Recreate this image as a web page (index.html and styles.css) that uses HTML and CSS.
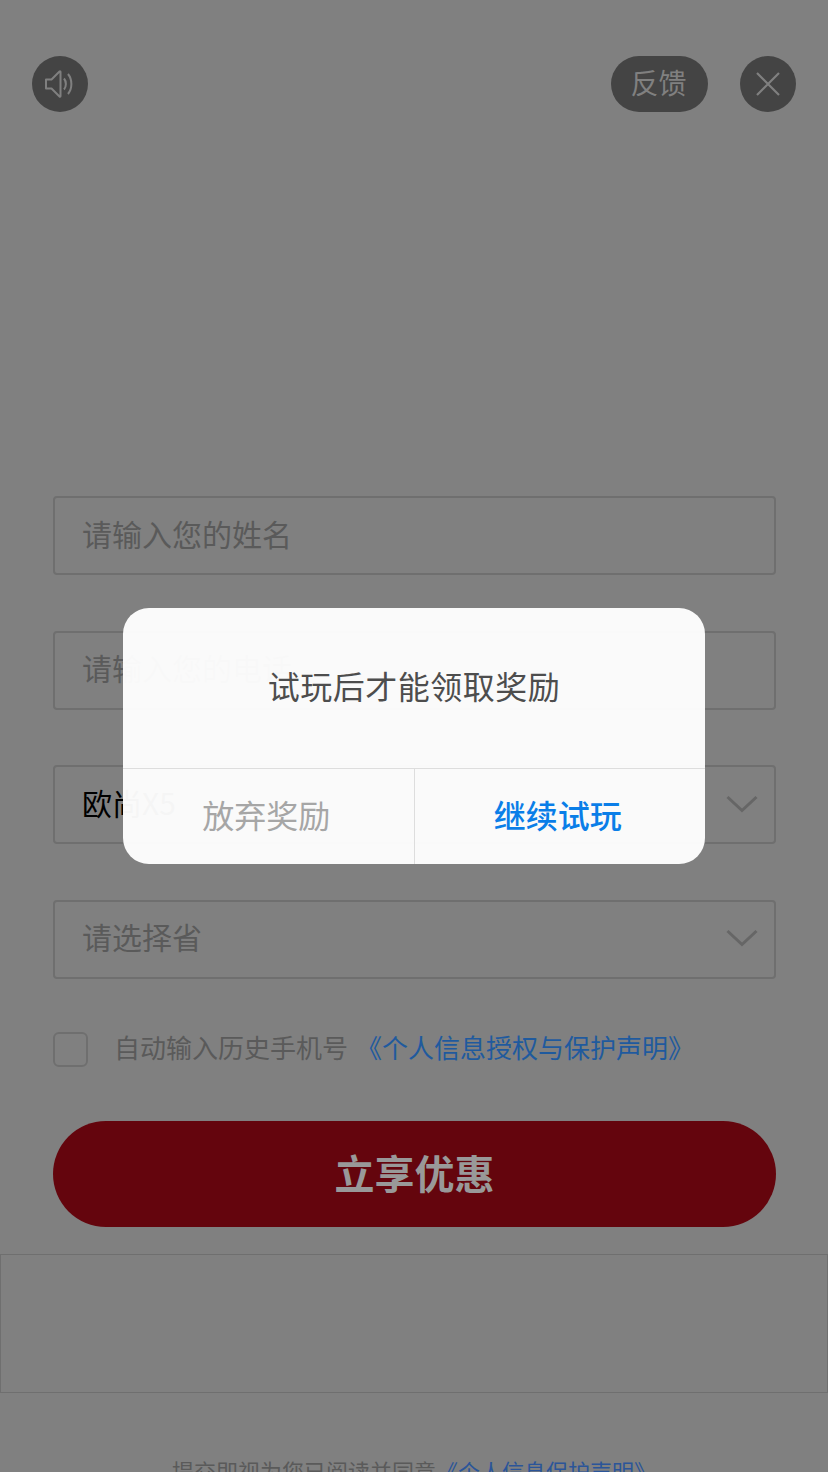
FILE: index.html
```html
<!DOCTYPE html>
<html lang="zh-CN">

<head>
    <meta charset="UTF-8">
    <meta name="viewport" content="width=device-width, initial-scale=1.0">
    <title>立享优惠</title>
    <link rel="stylesheet" href="styles.css">
</head>

<body>
    <div class="page">
        <div class="top-bar">
            <div class="round-btn">
                <svg width="32" height="32" viewBox="0 0 32 32" fill="none" stroke="#808080" stroke-width="2">
                    <path d="M2 11.5H7.5L15.5 3.5C16 3 16.5 3.3 16.5 4V28C16.5 28.7 16 29 15.5 28.500L7.500 20.500H2Z" stroke-linejoin="round" />
                    <path d="M20 10.500C22.500 13.500 22.500 18.500 20 21.500" />
                    <path d="M24 6C28.500 11.500 28.500 20.500 24 26" />
                </svg>
            </div>
            <div class="top-right">
                <div class="feedback">反馈</div>
                <div class="round-btn">
                    <svg width="24" height="24" viewBox="0 0 24 24" fill="none" stroke="#808080" stroke-width="2.200">
                        <path d="M1 1L23 23M23 1L1 23" />
                    </svg>
                </div>
            </div>
        </div>

        <form class="form">
            <div class="field"><span class="placeholder">请输入您的姓名</span></div>
            <div class="field"><span class="placeholder">请输入您的电话</span></div>
            <div class="field">
                <span class="chosen">欧尚X5</span>
                <svg class="chevron" width="32" height="18" viewBox="0 0 32 18" fill="none" stroke="#666666" stroke-width="3">
                    <path d="M1.500 2L16 15.500L30.500 2" />
                </svg>
            </div>
            <div class="field">
                <span class="placeholder">请选择省</span>
                <svg class="chevron" width="32" height="18" viewBox="0 0 32 18" fill="none" stroke="#666666" stroke-width="3">
                    <path d="M1.500 2L16 15.500L30.500 2" />
                </svg>
            </div>

            <div class="agree">
                <span class="checkbox"></span>
                <span class="agree-text">自动输入历史手机号</span>
                <a class="link">《个人信息授权与保护声明》</a>
            </div>

            <button type="button" class="submit">立享优惠</button>
        </form>

        <div class="empty-box"></div>

        <p class="footer">提交即视为您已阅读并同意<a class="link-small">《个人信息保护声明》</a></p>
    </div>

    <div class="overlay">
        <div class="dialog">
            <div class="dialog-title">试玩后才能领取奖励</div>
            <div class="dialog-actions">
                <div class="action action-cancel">放弃奖励</div>
                <div class="action action-ok">继续试玩</div>
            </div>
        </div>
    </div>
</body>

</html>
```

FILE: styles.css
```css
* {
    box-sizing: border-box;
}

html,
body {
    margin: 0;
    padding: 0;
    height: 1472px;
    overflow: hidden;
}

body {
    font-family: "Noto Sans CJK SC", "Liberation Sans", sans-serif;
    background-color: #808080;
    position: relative;
}

.page {
    height: 1472px;
    overflow: hidden;
}

.top-bar {
    display: flex;
    justify-content: space-between;
    padding: 56px 32px 0;
}

.top-right {
    display: flex;
    gap: 32px;
}

.round-btn {
    width: 56px;
    height: 56px;
    border-radius: 50%;
    background-color: #444444;
    display: flex;
    align-items: center;
    justify-content: center;
}

.feedback {
    width: 97px;
    height: 56px;
    padding-right: 2px;
    border-radius: 28px;
    background-color: #444444;
    color: #808080;
    font-size: 28px;
    line-height: 53px;
    text-align: center;
}

.form {
    display: flex;
    flex-direction: column;
    padding: 385px 52px 0 53px;
}

.field {
    height: 79px;
    margin-top: -1px;
    margin-bottom: 56.67px;
    padding: 0 28px 6px 27px;
    border: 2px solid #6f6f6f;
    border-radius: 4px;
    display: flex;
    align-items: center;
    justify-content: space-between;
    font-size: 30px;
}

.placeholder {
    color: #5a5a5a;
}

.chosen {
    color: #000000;
}

.chevron {
    margin-right: -12px;
    margin-top: 4px;
}

.agree {
    display: flex;
    align-items: center;
    height: 34px;
    margin-top: -2.67px;
    font-size: 26px;
}

.checkbox {
    width: 35px;
    height: 35px;
    border: 2px solid #6f6f6f;
    border-radius: 6px;
    margin-right: 26px;
}

.agree-text {
    color: #5a5a5a;
    margin-right: 8px;
    margin-top: -6px;
}

.link {
    color: #1f5a9e;
    margin-top: -6px;
}

.submit {
    height: 106px;
    margin-top: 54px;
    padding: 0 0 3px;
    border: none;
    border-radius: 53px;
    background-color: #64050d;
    color: #999999;
    font-family: inherit;
    font-size: 40px;
    font-weight: 700;
}

.empty-box {
    height: 139px;
    margin-top: 27px;
    border: 1px solid #6f6f6f;
}

.footer {
    margin: 62px 0 0;
    font-size: 22px;
    line-height: 30px;
    text-align: center;
    color: #5a5a5a;
}

.link-small {
    color: #2b5599;
}

.overlay {
    position: absolute;
    top: 0;
    left: 0;
    width: 100%;
    height: 100%;
    display: flex;
    align-items: center;
    justify-content: center;
}

.dialog {
    width: 582px;
    height: 256px;
    border-radius: 26px;
    background-color: rgba(255, 255, 255, 0.96);
    display: flex;
    flex-direction: column;
}

.dialog-title {
    height: 160px;
    padding-bottom: 6px;
    display: flex;
    align-items: center;
    justify-content: center;
    font-size: 32px;
    letter-spacing: 0.5px;
    color: #4d4d4d;
}

.dialog-actions {
    flex: 1;
    display: flex;
    border-top: 1px solid #dddddd;
}

.action {
    flex: 1;
    display: flex;
    align-items: center;
    justify-content: center;
    padding: 0 4px 6px 0;
    font-size: 32px;
}

.action-cancel {
    color: #a6a6a6;
    border-right: 1px solid #dddddd;
}

.action-ok {
    color: #0a7ee8;
    font-weight: 500;
}
```
